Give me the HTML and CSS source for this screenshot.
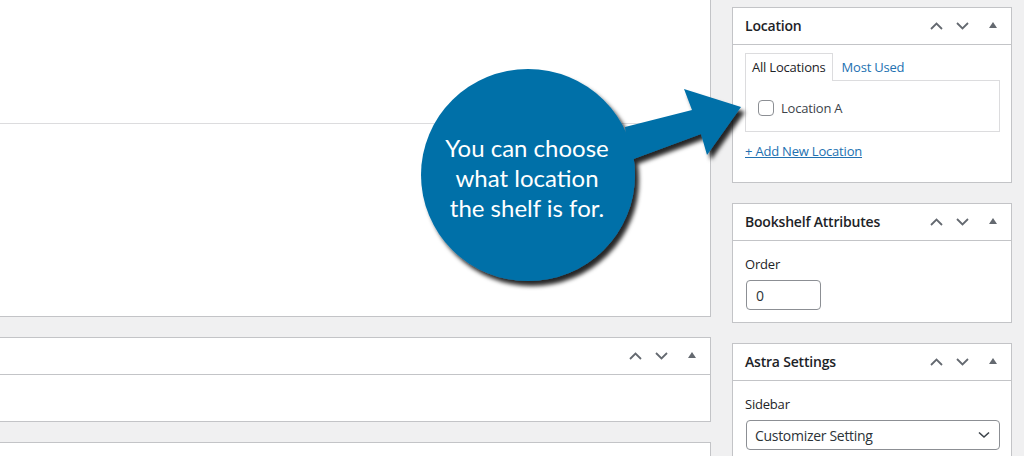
FILE: index.html
```html
<!DOCTYPE html>
<html lang="en">
<head>
<meta charset="utf-8">
<title>Bookshelf editor</title>
<link rel="stylesheet" href="styles.css">
</head>
<body>
<div class="page">
  <div class="main">
    <div class="panel panel-editor">
      <div class="editor-top"></div>
      <div class="editor-body"></div>
    </div>
    <div class="panel panel-meta">
      <div class="box-header">
        <h2 class="box-title"></h2>
        <div class="handle-actions">
          <span class="handle-btn"><svg width="13" height="8" viewBox="0 0 13 8"><path d="M1 7L6.5 1.5L12 7" fill="none" stroke="currentColor" stroke-width="1.8"/></svg></span>
          <span class="handle-btn"><svg width="13" height="8" viewBox="0 0 13 8"><path d="M1 1L6.5 6.5L12 1" fill="none" stroke="currentColor" stroke-width="1.8"/></svg></span>
          <span class="handle-toggle"><svg width="8" height="6" viewBox="0 0 8 6"><path d="M0 6L4 0L8 6Z" fill="currentColor"/></svg></span>
        </div>
      </div>
      <div class="meta-body"></div>
    </div>
    <div class="panel panel-next"></div>
  </div>

  <aside class="sidebar">
    <div class="postbox">
      <div class="box-header">
        <h2 class="box-title">Location</h2>
        <div class="handle-actions">
          <span class="handle-btn"><svg width="13" height="8" viewBox="0 0 13 8"><path d="M1 7L6.5 1.5L12 7" fill="none" stroke="currentColor" stroke-width="1.8"/></svg></span>
          <span class="handle-btn"><svg width="13" height="8" viewBox="0 0 13 8"><path d="M1 1L6.5 6.5L12 1" fill="none" stroke="currentColor" stroke-width="1.8"/></svg></span>
          <span class="handle-toggle"><svg width="8" height="6" viewBox="0 0 8 6"><path d="M0 6L4 0L8 6Z" fill="currentColor"/></svg></span>
        </div>
      </div>
      <div class="box-body location-body">
        <ul class="tabs">
          <li class="tab tab-active">All Locations</li>
          <li class="tab tab-link">Most Used</li>
        </ul>
        <div class="tab-panel">
          <span class="checkbox"></span>
          <span class="check-label">Location A</span>
        </div>
        <a class="add-link" href="#">+ Add New Location</a>
      </div>
    </div>

    <div class="postbox">
      <div class="box-header">
        <h2 class="box-title">Bookshelf Attributes</h2>
        <div class="handle-actions">
          <span class="handle-btn"><svg width="13" height="8" viewBox="0 0 13 8"><path d="M1 7L6.5 1.5L12 7" fill="none" stroke="currentColor" stroke-width="1.8"/></svg></span>
          <span class="handle-btn"><svg width="13" height="8" viewBox="0 0 13 8"><path d="M1 1L6.5 6.5L12 1" fill="none" stroke="currentColor" stroke-width="1.8"/></svg></span>
          <span class="handle-toggle"><svg width="8" height="6" viewBox="0 0 8 6"><path d="M0 6L4 0L8 6Z" fill="currentColor"/></svg></span>
        </div>
      </div>
      <div class="box-body field-body">
        <label class="field-label">Order</label>
        <input class="order-input" type="text" value="0">
      </div>
    </div>

    <div class="postbox">
      <div class="box-header">
        <h2 class="box-title">Astra Settings</h2>
        <div class="handle-actions">
          <span class="handle-btn"><svg width="13" height="8" viewBox="0 0 13 8"><path d="M1 7L6.5 1.5L12 7" fill="none" stroke="currentColor" stroke-width="1.8"/></svg></span>
          <span class="handle-btn"><svg width="13" height="8" viewBox="0 0 13 8"><path d="M1 1L6.5 6.5L12 1" fill="none" stroke="currentColor" stroke-width="1.8"/></svg></span>
          <span class="handle-toggle"><svg width="8" height="6" viewBox="0 0 8 6"><path d="M0 6L4 0L8 6Z" fill="currentColor"/></svg></span>
        </div>
      </div>
      <div class="box-body field-body">
        <label class="field-label">Sidebar</label>
        <div class="select">
          <span>Customizer Setting</span>
          <svg width="12" height="8" viewBox="0 0 12 8"><path d="M1 1.5L6 6L11 1.5" fill="none" stroke="#3c434a" stroke-width="1.6"/></svg>
        </div>
      </div>
    </div>
  </aside>
</div>

<div class="callout">
  <svg class="callout-shape" width="1024" height="456" viewBox="0 0 1024 456">
    <defs>
      <filter id="shadow" x="-20%" y="-20%" width="140%" height="140%">
        <feDropShadow dx="4" dy="5" stdDeviation="2.2" flood-color="#000" flood-opacity="0.85"/>
      </filter>
    </defs>
    <g filter="url(#shadow)" fill="#0370a8">
      <path d="M625 127L692 110L684 89L741 107L707 155L701 134L628 161Z"/>
      <ellipse cx="528" cy="175" rx="107" ry="106"/>
    </g>
  </svg>
  <p class="callout-text">You can choose<br>what location<br>the shelf is for.</p>
</div>
</body>
</html>
```

FILE: styles.css
```css
* { box-sizing: border-box; }

html, body { height: 456px; overflow: hidden; }

body {
  margin: 0;
  background: #f0f0f1;
  font-family: "Open Sans", "Noto Sans", sans-serif;
  font-size: 13px;
  letter-spacing: -0.2px;
  color: #3c434a;
}

.page {
  display: flex;
  gap: 21px;
  padding-right: 12px;
  height: 456px;
  overflow: hidden;
}

.main {
  flex: 1;
  min-width: 0;
  margin-left: -1px;
}

.panel {
  background: #fff;
  border: 1px solid #c3c4c7;
}

.panel-editor { margin-top: -20px; }
.editor-top { height: 143px; border-bottom: 1px solid #dcdcde; }
.editor-body { height: 192px; }

.panel-meta { margin-top: 20px; }
.meta-body { height: 46px; }

.panel-next { margin-top: 20px; height: 40px; }

.sidebar {
  width: 280px;
  flex: none;
  padding-top: 7px;
}

.postbox {
  background: #fff;
  border: 1px solid #c3c4c7;
  margin-bottom: 20px;
}

.box-header {
  height: 37px;
  display: flex;
  align-items: center;
  justify-content: space-between;
  border-bottom: 1px solid #c3c4c7;
}

.box-title {
  margin: 0;
  padding-left: 12px;
  font-size: 14px;
  font-weight: 600;
  line-height: 20px;
  letter-spacing: -0.2px;
  color: #1d2327;
}

.handle-actions {
  display: flex;
  height: 36px;
  color: #646970;
}

.handle-btn {
  width: 26px;
  display: flex;
  align-items: center;
  justify-content: center;
}

.handle-toggle {
  width: 36px;
  display: flex;
  align-items: center;
  justify-content: center;
  padding-bottom: 2px;
}

.box-body {
  padding: 0 11px 0 12px;
}

.location-body {
  padding-top: 8px;
  padding-bottom: 22px;
}

.tabs {
  display: flex;
  margin: 0;
  padding: 0;
  list-style: none;
}

.tab {
  line-height: 26px;
  height: 28px;
  padding: 0 6px;
  margin-bottom: -1px;
}

.tab-active {
  position: relative;
  z-index: 1;
  background: #fff;
  border: 1px solid #dcdcde;
  border-bottom: 0;
  color: #1d2327;
}

.tab-link {
  margin-left: 3px;
  color: #2271b1;
  padding-top: 1px;
}

.tab-panel {
  height: 52px;
  border: 1px solid #dcdcde;
  padding: 3px 0 0 12px;
  display: flex;
  align-items: center;
}

.checkbox {
  width: 16px;
  height: 16px;
  border: 1px solid #8c8f94;
  border-radius: 4px;
  margin-right: 7px;
  flex: none;
}

.add-link {
  display: block;
  margin-top: 10px;
  line-height: 18px;
  color: #2271b1;
  text-decoration: underline;
}

.field-body {
  padding-top: 13px;
  padding-bottom: 12px;
}

.field-label {
  display: block;
  line-height: 20px;
  margin-bottom: 6px;
  color: #1d2327;
}

.order-input {
  display: block;
  width: 75px;
  height: 30px;
  margin: 0 0 0 1px;
  padding: 0 9px;
  border: 1px solid #8c8f94;
  border-radius: 4px;
  font-family: inherit;
  font-size: 14px;
  color: #2c3338;
  background: #fff;
}

.select {
  width: 254px;
  height: 30px;
  margin-left: 1px;
  border: 1px solid #8c8f94;
  border-radius: 4px;
  display: flex;
  align-items: center;
  justify-content: space-between;
  padding: 0 9px 0 8px;
  font-size: 14px;
  letter-spacing: -0.3px;
  color: #2c3338;
}

.callout {
  position: absolute;
  left: 0;
  top: 0;
  width: 1024px;
  height: 456px;
  pointer-events: none;
}

.callout-shape {
  position: absolute;
  left: 0;
  top: 0;
}

.callout-text {
  position: absolute;
  left: 427px;
  top: 133px;
  width: 200px;
  margin: 0;
  text-align: center;
  font-family: Lato, "Open Sans", sans-serif;
  font-size: 24px;
  line-height: 30px;
  letter-spacing: 0;
  color: #fff;
}
```
